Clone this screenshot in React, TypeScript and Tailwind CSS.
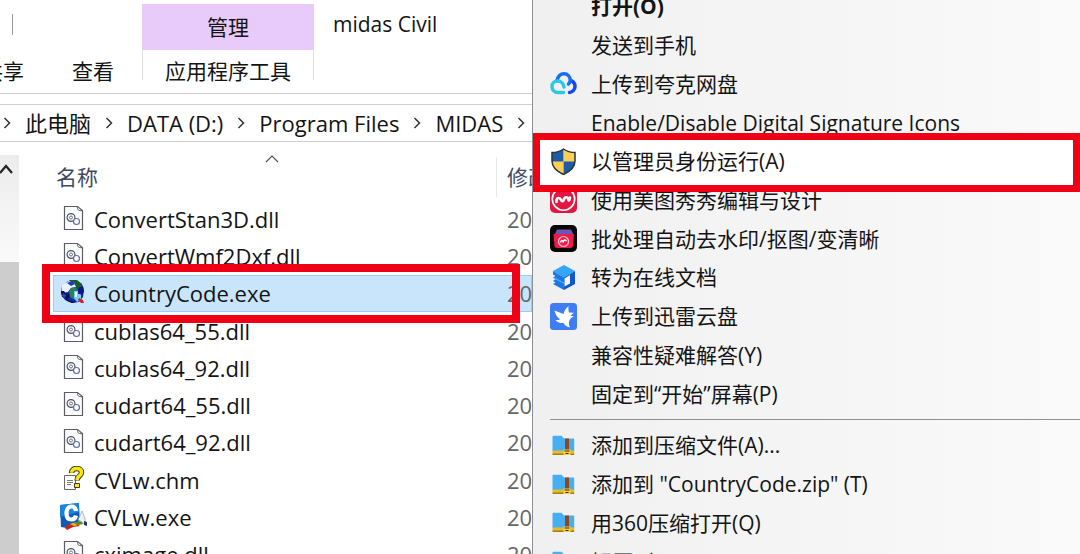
import type { ReactNode } from "react";

type FileKind = "dll" | "globe" | "chm" | "civil";

interface FileEntry {
  name: string;
  kind: FileKind;
  selected?: boolean;
}

interface MenuEntry {
  label: string;
  icon?: ReactNode;
  bold?: boolean;
  marked?: boolean;
}

const files: FileEntry[] = [
  { name: "ConvertStan3D.dll", kind: "dll" },
  { name: "ConvertWmf2Dxf.dll", kind: "dll" },
  { name: "CountryCode.exe", kind: "globe", selected: true },
  { name: "cublas64_55.dll", kind: "dll" },
  { name: "cublas64_92.dll", kind: "dll" },
  { name: "cudart64_55.dll", kind: "dll" },
  { name: "cudart64_92.dll", kind: "dll" },
  { name: "CVLw.chm", kind: "chm" },
  { name: "CVLw.exe", kind: "civil" },
  { name: "cximage.dll", kind: "dll" },
];

const crumbs = ["此电脑", "DATA (D:)", "Program Files", "MIDAS"];

function DllIcon() {
  return (
    <svg viewBox="0 0 28 28" className="w-7 h-7" fill="none" stroke="#5c5c66">
      <path d="M4.500 1.500h13l5 4v19h-18z" fill="#fdfdfd" strokeWidth="1.200" />
      <path d="M17.500 1.500c-.4 3 .6 4.500 5 4.200" />
      <circle cx="11" cy="12.500" r="3.900" strokeWidth="1.200" stroke="#4a4f63" />
      <circle cx="11" cy="12.500" r="1.500" stroke="#6b7088" />
      <circle cx="16.500" cy="16.500" r="3" fill="#fff" stroke="#5f6fa5" strokeWidth="1.200" />
    </svg>
  );
}

function GlobeIcon() {
  return (
    <svg viewBox="0 0 28 28" className="w-7 h-7">
      <path d="M8 2h9l5 3 2 6-1 7-4 5-7 1-7-3-4-6 1-8z" fill="#1622b4" />
      <path d="M9 1h8l5 4v6l-5-1-4-3z" fill="#16602e" />
      <path d="M2 6l7-4 5 2 2 4-5 1-3 4-6 1z" fill="#e9f2fa" />
      <path d="M7 4l5-2 3 3-4 2z" fill="#2336c8" />
      <path d="M1 12h3l2 3 5-1v3l-4 3-5-2z" fill="#0b1148" />
      <path d="M3 14l3 2-1 3-3-2z" fill="#2b44dd" />
      <path d="M11 9l4-1 3 3-2 5-1 5-5-3-1-5z" fill="#2c8058" />
      <path d="M14 12h4v3h3v6l-4 2-3-4z" fill="#6fd0fa" />
      <path d="M15 13h2v5h-2z" fill="#fff" />
      <path d="M18 9l5-2 1 6-3 3-2-3z" fill="#0d1780" />
      <path d="M5 19l5 3 6 1-4 1-5-2z" fill="#0b1148" />
      <path d="M19 19l4 2 1 3h-3l-3-3z" fill="#d42020" />
    </svg>
  );
}

function ChmIcon() {
  return (
    <svg viewBox="0 0 28 28" className="w-7 h-7">
      <path d="M4.500 9.500h11v14h-11z" fill="#fff" stroke="#666" />
      <path d="M7 14.500h6M7 16.500h6M7 18.500h4" stroke="#777" />
      <path d="M11.500 7c0-3 2.500-4.500 5-4.500 3 0 5 1.500 5 4 0 3.500-4.500 3.500-4.500 8" fill="none" stroke="#3c3a10" strokeWidth="5.500" />
      <path d="M14.500 17.500h5v4h-5z" fill="#f6e714" stroke="#3c3a10" />
      <path d="M11.500 6.800c0-2.800 2.500-4.300 5-4.300 3 0 5 1.500 5 4 0 3.500-4.500 3.500-4.500 7.500" fill="none" stroke="#f6e714" strokeWidth="3.600" />
    </svg>
  );
}

function CivilIcon() {
  return (
    <svg viewBox="0 0 28 28" className="w-7 h-7">
      <path d="M0 2l19-2 1 21-13 4-6-1z" fill="#0f5cb5" />
      <path d="M0 2l19-2v9L0 14z" fill="#1a83dc" />
      <path d="M16 8c-.5-3-2-4.500-4.500-4.500C8 3.500 6.500 7 6.500 10.500s1.500 6 5 6c2.500 0 4-1.500 4.500-4" fill="none" stroke="#fff" strokeWidth="4.200" />
      <path d="M5 25c3-6 7-3 11-5l4 3-7 1-6 3z" fill="#c82418" />
      <path d="M10 21c4-2 7-1 10-3l3 3-9 2z" fill="#e9b91c" />
      <path d="M14 20l7-2 2 3-6 1z" fill="#4c8f2c" />
      <path d="M22 8l-4 9 4 2 3 3v-7z" fill="#f0f0f0" stroke="#999" strokeWidth=".7" />
      <path d="M24 18l3 1v4l-3-1z" fill="#24346e" />
    </svg>
  );
}

const fileIcons: Record<FileKind, ReactNode> = {
  dll: <DllIcon />,
  globe: <GlobeIcon />,
  chm: <ChmIcon />,
  civil: <CivilIcon />,
};

function CloudIcon() {
  return (
    <svg viewBox="0 0 27 27" className="w-full" fill="none" strokeWidth="3.500" strokeLinecap="round">
      <path d="M20.800 10.500c2.700 1 4.200 3.200 4.200 5.900 0 3.300-2.500 5.500-5.500 6" stroke="#1748e8" />
      <path d="M7 10.500C8 6.500 10.700 3.700 14 3.700c3.500 0 6.300 3 6.300 6.600 0 1.500-.6 2.600-1.800 3.700" stroke="#1a6cf5" />
      <path d="M13.500 22.400H8c-3.500 0-6-2.500-6-6C2 13 4.500 11 7.500 11c3.500 0 6 2.500 6.500 6" stroke="#2cc8e6" />
    </svg>
  );
}

function ShieldIcon() {
  return (
    <svg viewBox="0 0 27 27" className="w-full">
      <path d="M13.500 1C10 3.500 6 4.500 2 4.500V13c0 6 4 10 11.500 13.500z" fill="#1c5ca8" />
      <path d="M13.500 1C17 3.500 21 4.500 25 4.500V13c0 6-4 10-11.500 13.500z" fill="#1c5ca8" />
      <path d="M13.500 1C17 3.500 21 4.500 25 4.500v9H13.500z" fill="#ffcf55" />
      <path d="M2 13.500h11.500v13C6 23 2.500 19 2 13.500z" fill="#ffcf55" />
      <path d="M13.500 1C10 3.500 6 4.500 2 4.500V13c0 6 4 10 11.500 13.500C21 23 25 19 25 13V4.500c-4 0-8-1-11.500-3.500z" fill="none" stroke="#2c3440" strokeWidth="1.500" />
    </svg>
  );
}

function MeituIcon() {
  return (
    <svg viewBox="0 0 27 27" className="w-full">
      <rect width="27" height="27" rx="5" fill="#e21843" />
      <circle cx="13.500" cy="13" r="11.200" fill="none" stroke="#fff" strokeWidth="1.600" />
      <path d="M6.500 16v-1.500c0-3 3.500-3.500 4.500-.5.800 2 2.200 1.500 2.700 0 1-3.500 4-3.500 4.500-.5.400 2 1.600.5 1.800-2" fill="none" stroke="#fff" strokeWidth="2.600" strokeLinecap="round" />
    </svg>
  );
}

function BatchIcon() {
  return (
    <svg viewBox="0 0 27 27" className="w-full">
      <rect width="27" height="27" rx="5" fill="#0b0508" />
      <path d="M7 4.500h14l2 4.500H5z" fill="#6d55b5" />
      <path d="M3.500 9h20.500l-1 11.500c-.2 1.700-1 2.500-2.700 2.500H7.200c-1.700 0-2.500-.8-2.700-2.500z" fill="#ee1c4a" />
      <circle cx="13.500" cy="16.500" r="5" fill="none" stroke="#ffc3cf" strokeWidth="1.200" />
      <path d="M10.500 17.500c.8-2.500 1.800-2.500 2.600-.8.800-2 1.800-2.400 3.400-.7" fill="none" stroke="#fff" strokeWidth="1.400" />
    </svg>
  );
}

function DocIcon() {
  return (
    <svg viewBox="0 0 27 27" className="w-full">
      <path d="M14 1l11 6-11 6.500L3 7z" fill="#35a5f5" />
      <path d="M3 7l11 6.500V26L3 20l2.500-1.500-2.500-1.500 2.500-2L3 13.500l2.500-1.500L3 10.500z" fill="#1a78e4" />
      <path d="M3 13.500l3 .5 8 4.500V20l-8.500-4.500z" fill="#45aef8" />
      <path d="M14 13.500L25 7v13l-11 6z" fill="#1257cf" />
      <path d="M14.500 14.500l5.500-3.500v8.500l-5.500 3z" fill="#f4f8ff" />
    </svg>
  );
}

function ThunderIcon() {
  return (
    <svg viewBox="0 0 27 27" className="w-full">
      <rect width="27" height="27" rx="3.500" fill="#3e7df2" />
      <path d="M4.500 7.500l9 3.500c.6-3 2.500-6 5-8-.2 2.500 0 4.500.4 6.500l5 .2-3.400 2.800 3.500 1c-2.500.8-3.800 2-4.600 4-.8 2-.6 4.500.6 7-3.500-1-5.500-2.500-6.500-4.500-3 .4-6-.5-8-3 2 .2 3.500 0 4.500-.8C7.500 14.500 5.300 11.500 4.500 7.500z" fill="#fff" />
    </svg>
  );
}

function ArchiveIcon() {
  return (
    <svg viewBox="0 0 27 27" className="w-full">
      <path d="M2.500 5c0-.8.400-1.200 1.200-1.200h7.800L14 6.500h9c.8 0 1.200.4 1.200 1V19H2.500z" fill="#48aef2" />
      <path d="M2.500 18.500h21.700V22c0 .7-.4 1-1 1H3.500c-.6 0-1-.4-1-1z" fill="#e6bb2e" />
      <path d="M2.500 21.500h21.700v.7c0 .6-.4.8-1 .8H3.500c-.6 0-1-.3-1-.8z" fill="#a87c14" />
      <path d="M15 6.500h4V18h-4z" fill="#8a4a1c" />
      <path d="M13.500 17.500h7V23h-7z" fill="#f6d24a" />
      <path d="M14.500 19h5M15.500 21.500h3" stroke="#3d2a0c" strokeWidth="1.200" />
    </svg>
  );
}

const mainEntries: MenuEntry[] = [
  { label: "打开(O)", bold: true },
  { label: "发送到手机" },
  { label: "上传到夸克网盘", icon: <CloudIcon /> },
  { label: "Enable/Disable Digital Signature Icons" },
  { label: "以管理员身份运行(A)", icon: <ShieldIcon />, marked: true },
  { label: "使用美图秀秀编辑与设计", icon: <MeituIcon /> },
  { label: "批处理自动去水印/抠图/变清晰", icon: <BatchIcon /> },
  { label: "转为在线文档", icon: <DocIcon /> },
  { label: "上传到迅雷云盘", icon: <ThunderIcon /> },
  { label: "兼容性疑难解答(Y)" },
  { label: "固定到“开始”屏幕(P)" },
];

const archiveEntries: MenuEntry[] = [
  { label: "添加到压缩文件(A)...", icon: <ArchiveIcon /> },
  { label: '添加到 "CountryCode.zip" (T)', icon: <ArchiveIcon /> },
  { label: "用360压缩打开(Q)", icon: <ArchiveIcon /> },
  { label: "解压到", icon: <ArchiveIcon /> },
];

function Chevron() {
  return (
    <svg viewBox="0 0 8 12" className="w-2 h-3 shrink-0" fill="none" stroke="#333" strokeWidth="1.500">
      <path d="M1.500 1l5 5-5 5" />
    </svg>
  );
}

function MenuItem({ entry }: { entry: MenuEntry }) {
  return (
    <li className={entry.marked ? "relative isolate z-10 flex" : "flex"}>
      {entry.marked && (
        <span className="absolute -z-10 inset-x-0 -top-[9px] -bottom-[11px] bg-white border-[7px] border-[#f00014]" />
      )}
      <button
        type="button"
        className={`flex-1 flex items-center gap-[14px] pl-[17px] text-left whitespace-nowrap ${
          entry.bold ? "font-bold" : ""
        }`}
      >
        <span className="w-[27px] shrink-0">{entry.icon}</span>
        {entry.label}
      </button>
    </li>
  );
}

function Ribbon() {
  return (
    <div className="flex h-[94px] pt-1 border-b border-[#cfcfcf]">
      <div className="w-[142px] shrink-0">
        <div className="h-[46px] pt-[10px] pl-3">
          <div className="w-px h-[21px] bg-[#999]" />
        </div>
        <div className="flex justify-end gap-12 pr-7 h-[42px] items-center whitespace-nowrap">
          <button type="button">共享</button>
          <button type="button">查看</button>
        </div>
      </div>
      <div className="w-[172px] shrink-0">
        <div className="h-[46px] flex items-center justify-center bg-[#e8cbfb]">管理</div>
        <button
          type="button"
          className="w-full h-[30px] pt-[7px] border-x border-[#dcdcdc] flex items-start justify-center"
        >
          应用程序工具
        </button>
      </div>
      <h1 className="pl-[19px] h-10 flex items-center">midas Civil</h1>
    </div>
  );
}

function Explorer() {
  return (
    <section className="w-[532px] shrink-0 flex flex-col overflow-hidden">
      <Ribbon />
      <nav className="mt-[10px] h-[38px] border-y border-[#cfcfcf] flex items-center gap-[14px] pl-[3px] pb-px text-[22px] whitespace-nowrap">
        <Chevron />
        {crumbs.map((crumb) => (
          <span key={crumb} className="flex items-center gap-[14px]">
            <button type="button">{crumb}</button>
            <Chevron />
          </span>
        ))}
      </nav>

      <div className="flex-1 flex min-h-0">
        {/* Scrollbar of the folder tree */}
        <div className="w-[19px] shrink-0 mt-[13px] flex flex-col">
          <div className="h-[107px] pt-2 bg-linear-to-b from-[#ececec] to-[#fafafa]">
            <svg viewBox="0 0 13 12" className="w-[13px] h-3" fill="none" stroke="#222" strokeWidth="2.200">
              <path d="M0 10l6-7 6 7" />
            </svg>
          </div>
          <div className="flex-1 bg-[#cdcdcd]" />
        </div>

        <div className="relative flex-1 pl-[34px] min-w-0">
          <svg
            viewBox="0 0 14 8"
            className="absolute left-[246px] top-[13px] w-[14px] h-2"
            fill="none"
            stroke="#555"
            strokeWidth="1.200"
          >
            <path d="M1 7l6-6 6 6" />
          </svg>
          <table className="w-full h-[431px] table-fixed border-collapse whitespace-nowrap">
            <thead>
              <tr className="h-[58px] text-left text-[#414a63]">
                <th className="p-0 pl-[3px] pt-3 font-normal">名称</th>
                <th className="w-[36px] p-0 font-normal">
                  <div className="mt-3 h-[40px] flex items-center pl-[10px] border-l border-[#e8e8e8]">
                    修改日期
                  </div>
                </th>
              </tr>
            </thead>
            <tbody className="text-[22px]">
              {files.map((file) => (
                <tr
                  key={file.name}
                  className={file.selected ? "bg-[#c9e5fc] shadow-[inset_0_0_0_1px_#99cdf5]" : ""}
                >
                  <td className="py-0 pl-[7px]">
                    <div className="flex items-center gap-[6px]">
                      {fileIcons[file.kind]}
                      {file.name}
                    </div>
                  </td>
                  <td className="py-0 pl-[11px] overflow-hidden text-[#666]">20</td>
                </tr>
              ))}
            </tbody>
          </table>
          <div className="absolute left-[23px] right-3 top-[122px] h-[59px] border-8 border-[#f00014]" />
        </div>
      </div>
    </section>
  );
}

export default function App() {
  return (
    <main className="flex h-screen overflow-hidden bg-white text-[#141414] text-[21px] leading-7 font-['Open_Sans','Noto_Sans_CJK_SC',sans-serif]">
      <Explorer />
      <aside className="flex-1 min-w-0 border-l border-[#8f8f8f] bg-linear-to-r from-[#f0f0f0] to-[#fafafa] overflow-hidden">
        <ul className="grid auto-rows-fr h-[426px] -mt-[13px]">
          {mainEntries.map((entry) => (
            <MenuItem key={entry.label} entry={entry} />
          ))}
        </ul>
        <hr className="my-[6px] ml-[17px] border-[#8f8f8f]" />
        <ul className="grid auto-rows-fr h-[155px]">
          {archiveEntries.map((entry) => (
            <MenuItem key={entry.label} entry={entry} />
          ))}
        </ul>
      </aside>
    </main>
  );
}
